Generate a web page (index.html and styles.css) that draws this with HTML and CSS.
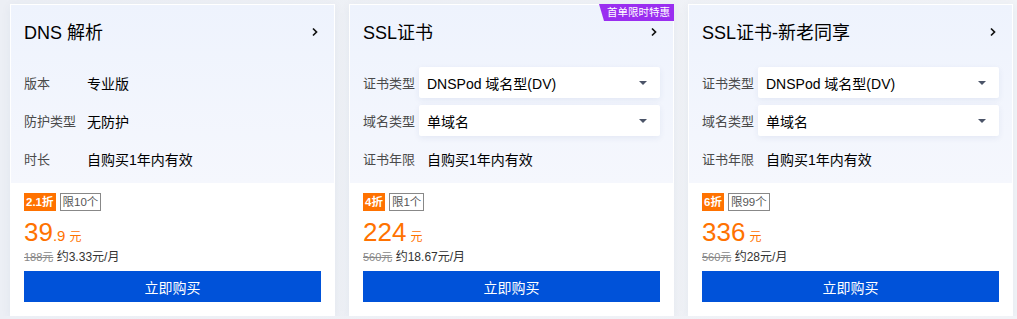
FILE: index.html
```html
<!DOCTYPE html>
<html lang="zh-CN">
<head>
  <meta charset="UTF-8" />
  <title>产品推荐</title>
  <link rel="stylesheet" href="styles.css">
</head>
<body>
  <div class="cards">
    <!-- DNS -->
    <div class="card">
      <div class="card-top">
        <div class="card-title">
          <span>DNS 解析</span>
          <svg class="chevron" width="8" height="10" viewBox="0 0 8 10"><polyline points="2,1.5 5.5,5 2,8.5" fill="none" stroke="#111" stroke-width="1.7"/></svg>
        </div>
        <div class="spec spec-wide">
          <div class="spec-row"><span class="spec-label">版本</span><span class="spec-value">专业版</span></div>
          <div class="spec-row"><span class="spec-label">防护类型</span><span class="spec-value">无防护</span></div>
          <div class="spec-row"><span class="spec-label">时长</span><span class="spec-value">自购买1年内有效</span></div>
        </div>
      </div>
      <div class="card-bottom">
        <div class="tags"><span class="tag-off">2.1折</span><span class="tag-limit">限10个</span></div>
        <div class="price"><span class="price-int">39</span><span class="price-dec">.9</span><span class="price-unit">元</span></div>
        <div class="price-sub"><s>188元</s> 约3.33元/月</div>
        <button class="buy">立即购买</button>
      </div>
    </div>

    <!-- SSL -->
    <div class="card">
      <span class="corner">首单限时特惠</span>
      <div class="card-top">
        <div class="card-title">
          <span>SSL证书</span>
          <svg class="chevron" width="8" height="10" viewBox="0 0 8 10"><polyline points="2,1.5 5.5,5 2,8.5" fill="none" stroke="#111" stroke-width="1.7"/></svg>
        </div>
        <div class="spec">
          <div class="spec-row"><span class="spec-label">证书类型</span><div class="select">DNSPod 域名型(DV)<i class="caret"></i></div></div>
          <div class="spec-row"><span class="spec-label">域名类型</span><div class="select">单域名<i class="caret"></i></div></div>
          <div class="spec-row"><span class="spec-label">证书年限</span><span class="spec-value">自购买1年内有效</span></div>
        </div>
      </div>
      <div class="card-bottom">
        <div class="tags"><span class="tag-off">4折</span><span class="tag-limit">限1个</span></div>
        <div class="price"><span class="price-int">224</span><span class="price-unit">元</span></div>
        <div class="price-sub"><s>560元</s> 约18.67元/月</div>
        <button class="buy">立即购买</button>
      </div>
    </div>

    <!-- SSL new & old -->
    <div class="card">
      <div class="card-top">
        <div class="card-title">
          <span>SSL证书-新老同享</span>
          <svg class="chevron" width="8" height="10" viewBox="0 0 8 10"><polyline points="2,1.5 5.5,5 2,8.5" fill="none" stroke="#111" stroke-width="1.7"/></svg>
        </div>
        <div class="spec">
          <div class="spec-row"><span class="spec-label">证书类型</span><div class="select">DNSPod 域名型(DV)<i class="caret"></i></div></div>
          <div class="spec-row"><span class="spec-label">域名类型</span><div class="select">单域名<i class="caret"></i></div></div>
          <div class="spec-row"><span class="spec-label">证书年限</span><span class="spec-value">自购买1年内有效</span></div>
        </div>
      </div>
      <div class="card-bottom">
        <div class="tags"><span class="tag-off">6折</span><span class="tag-limit">限99个</span></div>
        <div class="price"><span class="price-int">336</span><span class="price-unit">元</span></div>
        <div class="price-sub"><s>560元</s> 约28元/月</div>
        <button class="buy">立即购买</button>
      </div>
    </div>
  </div>
</body>
</html>
```

FILE: styles.css
```css
/* Base */
body {
  margin: 0;
  font-family: "Liberation Sans", "Noto Sans CJK SC", sans-serif;
  background: linear-gradient(90deg, #eceff5, #f1f3f7);
  color: #000;
}

/* Row of cards */
.cards {
  display: flex;
  gap: 14px;
  padding: 4px 4px 0 10px;
}

.card {
  position: relative; /* for the corner badge */
  width: 325px;
  height: 312px;
  box-sizing: border-box;
  border: 1px solid #fff;
  background: #fff;
  box-shadow: 0 2px 10px rgba(40, 60, 110, 0.06);
  display: flex;
  flex-direction: column;
}

/* Top part */
.card-top {
  height: 179px;
  box-sizing: border-box;
  padding: 13px 13px 0;
  background: linear-gradient(180deg, #eef3fd 0%, #f5f7fd 100%);
}
.card-title {
  display: flex;
  justify-content: space-between;
  align-items: center;
  height: 26px;
  font-size: 18px;
}
.chevron {
  margin: 2px 2px 0 0;
}

.spec {
  margin-top: 23px;
  display: flex;
  flex-direction: column;
  gap: 7px;
}
.spec-row {
  display: grid;
  grid-template-columns: 56px 1fr;
  align-items: center;
  height: 31px;
}
.spec-wide .spec-row {
  grid-template-columns: 63px 1fr;
}
.spec-label {
  font-size: 13px;
  color: #4a4a4a;
}
.spec-value {
  font-size: 14px;
  padding-left: 8px;
}
.spec-wide .spec-value {
  padding-left: 0;
}

/* Dropdown */
.select {
  display: flex;
  align-items: center;
  justify-content: space-between;
  height: 31px;
  padding: 0 13px 0 8px;
  background: #fff;
  border-radius: 2px;
  box-shadow: 0 2px 6px rgba(30, 60, 130, 0.07);
  font-size: 14px;
}
.caret {
  width: 0;
  height: 0;
  border-left: 4px solid transparent;
  border-right: 4px solid transparent;
  border-top: 4px solid #4b5468;
}

/* Corner badge */
.corner {
  position: absolute;
  top: -1px;
  right: -1px;
  height: 17px;
  line-height: 17px;
  padding: 0 4px 0 8px;
  font-size: 10.5px;
  color: #fff;
  background: #9a2ef0;
  clip-path: polygon(0 0, 100% 0, 100% 100%, 5px 100%);
}

/* Bottom part */
.card-bottom {
  flex: 1;
  padding: 10px 13px 13px;
  display: flex;
  flex-direction: column;
}
.tags {
  display: flex;
  gap: 4px;
  height: 18px;
}
.tag-off {
  background: #ff7200;
  color: #fff;
  font-size: 11.5px;
  font-weight: bold;
  line-height: 18px;
  padding: 0 2px;
}
.tag-limit {
  border: 1px solid #888;
  color: #555;
  font-size: 11.5px;
  line-height: 16px;
  padding: 0 2px;
}

.price {
  margin-top: 6px;
  height: 30px;
  line-height: 30px;
  color: #ff7200;
  white-space: nowrap;
}
.price-int {
  font-size: 26px;
}
.price-dec {
  font-size: 15px;
}
.price-unit {
  font-size: 12px;
  margin-left: 4px;
}
.price-sub {
  margin-top: 2px;
  font-size: 12px;
  line-height: 16px;
  color: #333;
}
.price-sub s {
  color: #888;
  font-size: 11px;
}

.buy {
  margin-top: 6px;
  height: 31px;
  border: none;
  background: #0052d9;
  color: #fff;
  font-family: inherit;
  font-size: 14px;
  cursor: pointer;
}
.buy:hover {
  background: #266fe8;
}
```
